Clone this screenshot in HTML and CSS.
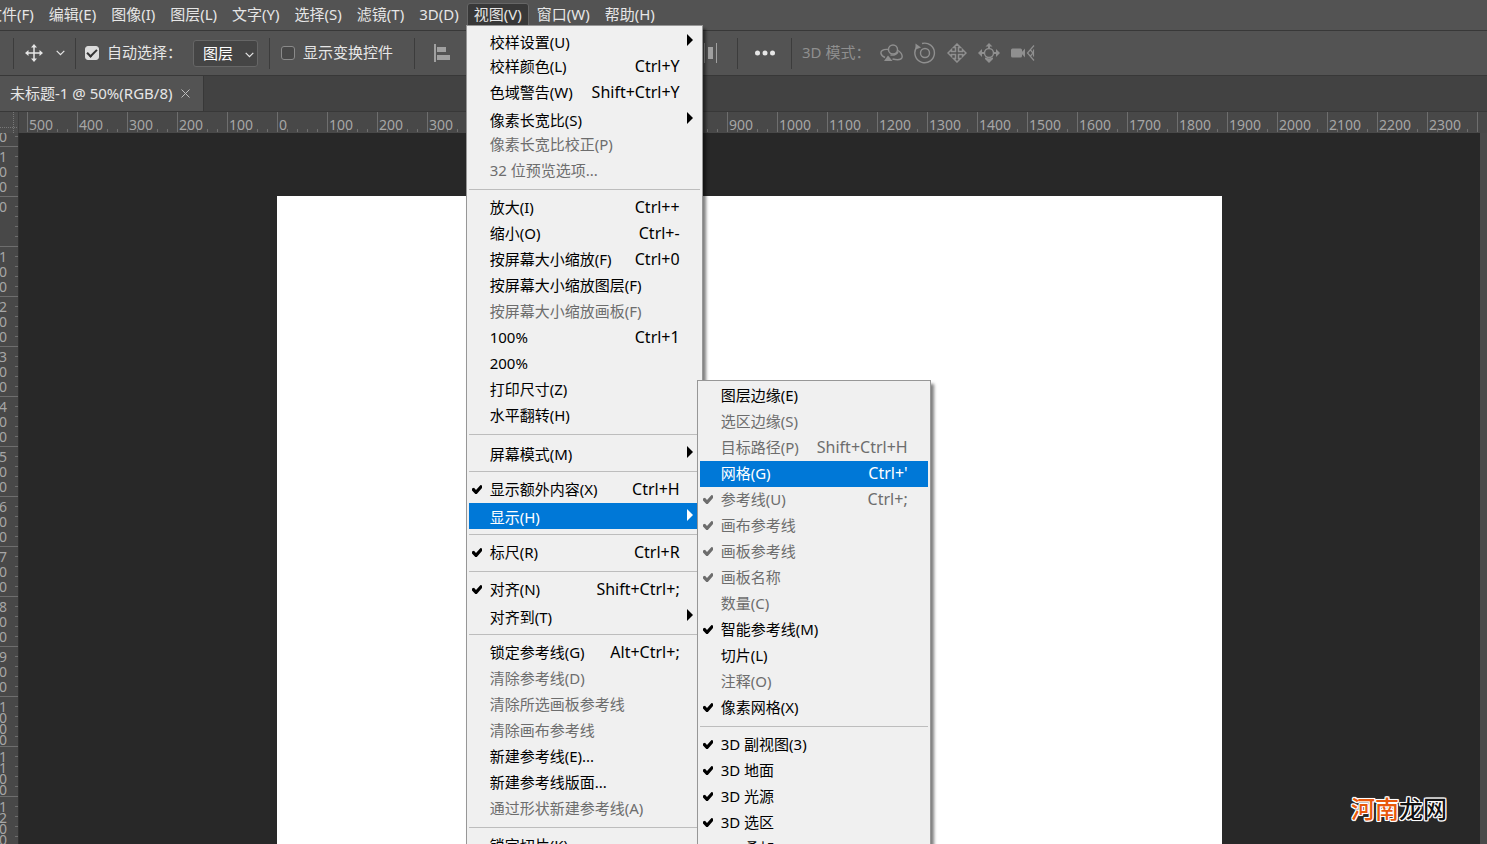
FILE: index.html
```html
<!DOCTYPE html>
<html lang="zh-CN">
<head>
<meta charset="utf-8">
<title>未标题-1 @ 50%(RGB/8)</title>
<link rel="stylesheet" href="styles.css">
</head>
<body>
<svg class="defs" aria-hidden="true">
  <symbol id="check" viewBox="0 0 10 9"><path d="M0 3.5 2 2.800 4 5 8.500 0 10 0.500V3L4.800 9H3.300L0 5.500z" fill="currentColor"/></symbol>
  <symbol id="arrow" viewBox="0 0 6 12"><path d="M0 0 6 6 0 12z" fill="currentColor"/></symbol>
  <symbol id="chevron" viewBox="0 0 9 6"><path d="M.7.8 4.500 4.600 8.300.8" fill="none" stroke="currentColor" stroke-width="1.200"/></symbol>
</svg>
<div class="app">
  <nav class="menubar">
    <div class="menubar-item"><button class="menubar-button">文件(F)</button></div>
    <div class="menubar-item"><button class="menubar-button">编辑(E)</button></div>
    <div class="menubar-item"><button class="menubar-button">图像(I)</button></div>
    <div class="menubar-item"><button class="menubar-button">图层(L)</button></div>
    <div class="menubar-item"><button class="menubar-button">文字(Y)</button></div>
    <div class="menubar-item"><button class="menubar-button">选择(S)</button></div>
    <div class="menubar-item"><button class="menubar-button">滤镜(T)</button></div>
    <div class="menubar-item"><button class="menubar-button">3D(D)</button></div>
    <div class="menubar-item">
      <button class="menubar-button is-open">视图(V)</button>
      <ul class="menu menu-view">
        <li><button class="item has-sub"><span>校样设置(U)</span><svg class="arrow"><use href="#arrow"/></svg></button></li>
        <li><button class="item"><span>校样颜色(L)</span><kbd>Ctrl+Y</kbd></button></li>
        <li><button class="item"><span>色域警告(W)</span><kbd>Shift+Ctrl+Y</kbd></button></li>
        <li><button class="item has-sub"><span>像素长宽比(S)</span><svg class="arrow"><use href="#arrow"/></svg></button></li>
        <li><button class="item" disabled><span>像素长宽比校正(P)</span></button></li>
        <li><button class="item" disabled><span>32 位预览选项...</span></button></li>
        <li class="rule"></li>
        <li><button class="item"><span>放大(I)</span><kbd>Ctrl++</kbd></button></li>
        <li><button class="item"><span>缩小(O)</span><kbd>Ctrl+-</kbd></button></li>
        <li><button class="item"><span>按屏幕大小缩放(F)</span><kbd>Ctrl+0</kbd></button></li>
        <li><button class="item"><span>按屏幕大小缩放图层(F)</span></button></li>
        <li><button class="item" disabled><span>按屏幕大小缩放画板(F)</span></button></li>
        <li><button class="item"><span>100%</span><kbd>Ctrl+1</kbd></button></li>
        <li><button class="item"><span>200%</span></button></li>
        <li><button class="item"><span>打印尺寸(Z)</span></button></li>
        <li><button class="item"><span>水平翻转(H)</span></button></li>
        <li class="rule"></li>
        <li><button class="item has-sub"><span>屏幕模式(M)</span><svg class="arrow"><use href="#arrow"/></svg></button></li>
        <li class="rule"></li>
        <li><button class="item"><svg class="check"><use href="#check"/></svg><span>显示额外内容(X)</span><kbd>Ctrl+H</kbd></button></li>
        <li class="sub-host">
          <button class="item has-sub is-active"><span>显示(H)</span><svg class="arrow"><use href="#arrow"/></svg></button>
          <ul class="menu menu-show">
            <li><button class="item"><span>图层边缘(E)</span></button></li>
            <li><button class="item" disabled><span>选区边缘(S)</span></button></li>
            <li><button class="item" disabled><span>目标路径(P)</span><kbd>Shift+Ctrl+H</kbd></button></li>
            <li><button class="item is-active"><span>网格(G)</span><kbd>Ctrl+'</kbd></button></li>
            <li><button class="item" disabled><svg class="check"><use href="#check"/></svg><span>参考线(U)</span><kbd>Ctrl+;</kbd></button></li>
            <li><button class="item" disabled><svg class="check"><use href="#check"/></svg><span>画布参考线</span></button></li>
            <li><button class="item" disabled><svg class="check"><use href="#check"/></svg><span>画板参考线</span></button></li>
            <li><button class="item" disabled><svg class="check"><use href="#check"/></svg><span>画板名称</span></button></li>
            <li><button class="item" disabled><span>数量(C)</span></button></li>
            <li><button class="item"><svg class="check"><use href="#check"/></svg><span>智能参考线(M)</span></button></li>
            <li><button class="item"><span>切片(L)</span></button></li>
            <li><button class="item" disabled><span>注释(O)</span></button></li>
            <li><button class="item"><svg class="check"><use href="#check"/></svg><span>像素网格(X)</span></button></li>
            <li class="rule"></li>
            <li><button class="item"><svg class="check"><use href="#check"/></svg><span>3D 副视图(3)</span></button></li>
            <li><button class="item"><svg class="check"><use href="#check"/></svg><span>3D 地面</span></button></li>
            <li><button class="item"><svg class="check"><use href="#check"/></svg><span>3D 光源</span></button></li>
            <li><button class="item"><svg class="check"><use href="#check"/></svg><span>3D 选区</span></button></li>
            <li><button class="item"><span>UV 叠加</span></button></li>
          </ul>
        </li>
        <li class="rule"></li>
        <li><button class="item"><svg class="check"><use href="#check"/></svg><span>标尺(R)</span><kbd>Ctrl+R</kbd></button></li>
        <li class="rule"></li>
        <li><button class="item"><svg class="check"><use href="#check"/></svg><span>对齐(N)</span><kbd>Shift+Ctrl+;</kbd></button></li>
        <li><button class="item has-sub"><span>对齐到(T)</span><svg class="arrow"><use href="#arrow"/></svg></button></li>
        <li class="rule"></li>
        <li><button class="item"><span>锁定参考线(G)</span><kbd>Alt+Ctrl+;</kbd></button></li>
        <li><button class="item" disabled><span>清除参考线(D)</span></button></li>
        <li><button class="item" disabled><span>清除所选画板参考线</span></button></li>
        <li><button class="item" disabled><span>清除画布参考线</span></button></li>
        <li><button class="item"><span>新建参考线(E)...</span></button></li>
        <li><button class="item"><span>新建参考线版面...</span></button></li>
        <li><button class="item" disabled><span>通过形状新建参考线(A)</span></button></li>
        <li class="rule"></li>
        <li><button class="item"><span>锁定切片(K)</span></button></li>
      </ul>
    </div>
    <div class="menubar-item"><button class="menubar-button">窗口(W)</button></div>
    <div class="menubar-item"><button class="menubar-button">帮助(H)</button></div>
  </nav>

  <div class="options">
    <div class="group group-tool">
      <button class="icon-button" aria-label="移动工具"><svg width="18" height="18" viewBox="0 0 18 18"><path d="M9 2v14M2 9h14" stroke="currentColor" stroke-width="1.500"/><path d="M9 0l3 3.500H6zM9 18l3-3.500H6zM0 9l3.500-3v6zM18 9l-3.500-3v6z" fill="currentColor"/></svg></button>
      <button class="icon-button" aria-label="工具预设"><svg width="9" height="6"><use href="#chevron"/></svg></button>
    </div>
    <div class="group group-select">
      <input class="box" type="checkbox" id="auto" checked>
      <label for="auto">自动选择：</label>
      <span class="select-wrap"><select class="select" aria-label="自动选择对象"><option>图层</option></select><svg class="select-arrow" width="9" height="6"><use href="#chevron"/></svg></span>
    </div>
    <div class="group group-transform">
      <input class="box" type="checkbox" id="transform">
      <label for="transform">显示变换控件</label>
    </div>
    <div class="group group-align">
      <button class="icon-button" aria-label="左对齐"><svg width="16" height="18" viewBox="0 0 16 18"><path d="M0 0h2v18H0zM3 3h9v5H3zM3 11h13v5H3z" fill="currentColor"/></svg></button>
      <button class="icon-button" aria-label="水平居中对齐"><svg width="16" height="18" viewBox="0 0 16 18"><path d="M7 0h2v18H7zM3 3h10v5H3zM0 11h16v5H0z" fill="currentColor"/></svg></button>
      <button class="icon-button" aria-label="右对齐"><svg width="16" height="18" viewBox="0 0 16 18"><path d="M14 0h2v18h-2zM4 3h9v5H4zM0 11h13v5H0z" fill="currentColor"/></svg></button>
      <button class="icon-button" aria-label="水平分布"><svg width="14" height="20" viewBox="0 0 14 20"><path d="M0 0h1v20H0zM12 0h1v20h-1zM4 4h5v12H4z" fill="currentColor"/></svg></button>
    </div>
    <div class="group group-more">
      <button class="icon-button" aria-label="更多"><svg width="20" height="6" viewBox="0 0 20 6"><circle cx="2.500" cy="3" r="2.500" fill="currentColor"/><circle cx="10" cy="3" r="2.500" fill="currentColor"/><circle cx="17.500" cy="3" r="2.500" fill="currentColor"/></svg></button>
    </div>
    <div class="group group-3d">
      <span class="mode-label">3D 模式：</span>
      <button class="icon-button" aria-label="环绕"><svg width="23" height="20" viewBox="0 0 23 20" fill="none" stroke="currentColor" stroke-width="1.400"><circle cx="13" cy="6.500" r="4.500"/><path d="M8 6.500C3 6 .5 8 1 10.500c.3 1.600 1.800 3 4 4M18 7.500c3 2 4.500 5 4 7-.8 2.500-5 2.600-9.500 1.500M18 9c-1.500 2.300-4.500 3.500-7.500 3"/><path d="M4 18l4-5.500 4.500 5.500z" fill="currentColor" stroke="none"/></svg></button>
      <button class="icon-button" aria-label="滚动"><svg width="22" height="22" viewBox="0 0 22 22" fill="none" stroke="currentColor" stroke-width="1.400"><circle cx="11" cy="11" r="4.500"/><path d="M8 1.500a9.800 9.800 0 1 1-5.500 4"/><path d="M1.500 1.500v6l5.500-2z" fill="currentColor" stroke="none"/></svg></button>
      <button class="icon-button" aria-label="平移"><svg width="20" height="20" viewBox="0 0 20 20" fill="none" stroke="currentColor" stroke-width="1.500"><path d="M10 1l3.500 3.500H11.500V8.500H15.500V6.500L19 10l-3.500 3.500V11.500H11.500V15.500H13.500L10 19l-3.500-3.500H8.500V11.500H4.500V13.500L1 10l3.500-3.500V8.500H8.500V4.500H6.500z"/></svg></button>
      <button class="icon-button" aria-label="滑动"><svg width="22" height="20" viewBox="0 0 22 20"><circle cx="11" cy="10" r="4.500" fill="none" stroke="currentColor" stroke-width="1.400"/><path d="M11 0l3.500 3.500H12V5.500h-2V3.500H7.500zM0 10l4-4v3h2.500v2H4v3zM22 10l-4-4v3h-2.500v2H18v3zM7 14.500l4 1 4-1v1.500l-4 4-4-4z" fill="currentColor"/></svg></button>
      <button class="icon-button" aria-label="变焦相机"><svg width="24" height="16" viewBox="0 0 24 16"><rect y="3.500" width="11" height="9" rx="1.500" fill="currentColor"/><path d="M10 8l4-4.500v9z" fill="currentColor"/><path d="M23 .5 16.500 8l6.500 7.500M22.500 4.500v7M19.500 5l2.500 3-2.500 3" fill="none" stroke="currentColor" stroke-width="1.200"/></svg></button>
    </div>
  </div>

  <div class="tabs">
    <div class="tab"><span>未标题-1 @ 50%(RGB/8)</span><button class="icon-button tab-close" aria-label="关闭"><svg width="9" height="9" viewBox="0 0 9 9"><path d="M.5.500l8 8M8.500.500l-8 8" stroke="currentColor"/></svg></button></div>
  </div>

  <div class="ruler-row">
    <div class="corner"></div>
    <div class="ruler-h">
      <span>500</span><span>400</span><span>300</span><span>200</span><span>100</span><span>0</span><span>100</span><span>200</span><span>300</span><span>400</span><span>500</span><span>600</span><span>700</span><span>800</span><span>900</span><span>1000</span><span>1100</span><span>1200</span><span>1300</span><span>1400</span><span>1500</span><span>1600</span><span>1700</span><span>1800</span><span>1900</span><span>2000</span><span>2100</span><span>2200</span><span>2300</span><span></span>
    </div>
  </div>

  <div class="stage">
    <div class="ruler-v">
      <span class="partial"><i>0</i></span>
      <span><i>1</i><i>0</i><i>0</i></span>
      <span><i>0</i></span>
      <span><i>1</i><i>0</i><i>0</i></span>
      <span><i>2</i><i>0</i><i>0</i></span>
      <span><i>3</i><i>0</i><i>0</i></span>
      <span><i>4</i><i>0</i><i>0</i></span>
      <span><i>5</i><i>0</i><i>0</i></span>
      <span><i>6</i><i>0</i><i>0</i></span>
      <span><i>7</i><i>0</i><i>0</i></span>
      <span><i>8</i><i>0</i><i>0</i></span>
      <span><i>9</i><i>0</i><i>0</i></span>
      <span class="dense"><i>1</i><i>0</i><i>0</i><i>0</i></span>
      <span class="dense"><i>1</i><i>1</i><i>0</i><i>0</i></span>
      <span class="dense"><i>1</i><i>2</i><i>0</i><i>0</i></span>
    </div>
    <main class="pasteboard"><div class="canvas"></div></main>
    <div class="scrollbar"></div>
    <div class="watermark"><span class="brand">河南</span><span>龙网</span></div>
  </div>
</div>
</body>
</html>
```
FILE: styles.css
```css
* { box-sizing: border-box; }

body {
  margin: 0;
  background: #282828;
  color: #e6e6e6;
  font: 15px/20px "Noto Sans", "Noto Sans CJK SC", sans-serif;
}

button, select, kbd { font: inherit; color: inherit; }
button { border: 0; padding: 0; background: none; }
svg { display: block; flex: none; }
.defs { position: absolute; width: 0; height: 0; }

.app {
  display: flex;
  flex-direction: column;
  height: 100vh;
  overflow: hidden;
}

/* Menu bar */
.menubar {
  display: flex;
  gap: 1px;
  height: 31px;
  padding-top: 3px;
  background: #535353;
  border-bottom: 1px solid #383838;
}
.menubar-item { position: relative; flex: none; }
.menubar-item:first-child { margin-left: -20px; }
.menubar-button {
  display: block;
  height: 23px;
  padding: 0 6px 2px;
  border: 1px solid transparent;
  border-radius: 3px 3px 0 0;
  white-space: nowrap;
}
.menubar-button.is-open { background: #383838; border-color: #666; }

/* Drop-down menus */
.menu {
  position: absolute;
  z-index: 2;
  margin: 0;
  padding: 2px;
  list-style: none;
  color: #000;
  background: #f0f0f0;
  border: 1px solid #979797;
  box-shadow: 3px 4px 3px rgba(0, 0, 0, 0.5);
}
.menu-view { top: 22px; left: -1px; width: 237px; }
.menu-show { top: -123px; left: 228px; width: 234px; }
.sub-host { position: relative; }
.item {
  position: relative;
  display: flex;
  align-items: center;
  justify-content: space-between;
  width: 100%;
  height: 26px;
  padding: 0 20px 2px 21px;
  white-space: nowrap;
  text-align: left;
}
.item:disabled { color: #6d6d6d; }
.item.is-active { color: #fff; background: #0078d7; }
.item.has-sub > span { padding-top: 4px; }
.item kbd { font-size: 16px; }
.check { position: absolute; left: 3px; top: 8px; width: 10px; height: 9px; }
.arrow { position: absolute; right: 7px; top: 6px; width: 6px; height: 12px; }
.rule { height: 11px; padding: 5px 0; }
.rule::before { content: ""; display: block; height: 1px; background: #bdbdbd; }

/* Options bar */
.options {
  display: flex;
  align-items: center;
  height: 45px;
  padding-left: 13px;
  background: #535353;
  border-bottom: 1px solid #383838;
  white-space: nowrap;
}
.group {
  display: flex;
  align-items: center;
  flex: none;
  height: 31px;
  border-left: 1px solid #3c3c3c;
}
.group-tool { width: 62px; padding-left: 11px; gap: 13px; }
.group-select { width: 194px; padding-left: 9px; gap: 8px; }
.group-transform { width: 145px; padding-left: 11px; gap: 8px; }
.group-align { width: 323px; padding: 0 19px; justify-content: space-between; color: #a0a0a0; }
.group-more { width: 54px; padding-left: 17px; }
.group-3d { padding-left: 10px; gap: 11px; color: #8f8f8f; }
.group label, .mode-label { padding-bottom: 2px; }
.mode-label { width: 67px; }
.box {
  appearance: none;
  width: 14px;
  height: 14px;
  margin: 0;
  border: 1px solid #8a8a8a;
  border-radius: 3px;
  background: #484848;
}
.box:checked { display: grid; place-items: center; background: #dcdcdc; border-color: #dcdcdc; }
.box:checked::before {
  content: "";
  width: 8px;
  height: 4px;
  margin-bottom: 3px;
  border: solid #333;
  border-width: 0 0 2px 2px;
  rotate: -45deg;
}
.select-wrap { position: relative; margin-left: auto; margin-right: 11px; }
.select {
  appearance: none;
  display: block;
  width: 65px;
  height: 27px;
  padding: 0 9px;
  color: #fff;
  background: #454545;
  border: 1px solid #666;
  border-radius: 3px;
}
.select-arrow { position: absolute; right: 4px; top: 12px; pointer-events: none; }

/* Document tabs */
.tabs {
  display: flex;
  height: 36px;
  background: #424242;
  border-bottom: 1px solid #383838;
}
.tab {
  display: flex;
  align-items: center;
  gap: 9px;
  padding: 0 13px 0 10px;
  background: #535353;
  border-right: 1px solid #383838;
}
.tab span { padding-bottom: 2px; }
.tab-close { color: #bdbdbd; }

/* Rulers */
.ruler-row { display: flex; height: 21px; background: #484848; }
.corner {
  flex: none;
  width: 19px;
  background:
    repeating-linear-gradient(#777 0 1px, transparent 1px 2px) 13px 0 / 1px 100% no-repeat,
    repeating-linear-gradient(90deg, #777 0 1px, transparent 1px 2px) 0 15px / 100% 1px no-repeat,
    #4c4c4c;
  border-right: 1px solid #3c3c3c;
}
.ruler-h {
  display: flex;
  flex: 1;
  min-width: 0;
  overflow: hidden;
  padding-left: 8px;
  color: #a6a6a6;
  font-size: 14px;
}
.ruler-h span {
  flex: none;
  width: 50px;
  height: 20px;
  padding: 3px 0 0 1px;
  border-left: 1px solid #6e6e6e;
  background: repeating-linear-gradient(90deg, transparent 0 9px, #6e6e6e 9px 10px) 0 100% / 49px 3px no-repeat;
}
.stage { position: relative; display: flex; flex: 1; min-height: 0; }
.ruler-v {
  flex: none;
  width: 19px;
  overflow: hidden;
  background: #484848;
  border-right: 1px solid #303030;
  color: #a6a6a6;
  font-size: 14px;
  line-height: 15px;
}
.ruler-v span {
  display: flex;
  flex-direction: column;
  height: 50px;
  padding-top: 2px;
  border-top: 1px solid #6e6e6e;
  background: repeating-linear-gradient(transparent 0 9px, #6e6e6e 9px 10px) 100% 0 / 3px 49px no-repeat;
}
.ruler-v i { margin-left: -1px; font-style: normal; }
.ruler-v .partial { justify-content: flex-end; height: 13px; padding: 0 0 2px; border: 0; background-position: 100% -6px; }
.ruler-v .dense { padding-top: 4px; line-height: 11px; }

/* Document area */
.pasteboard { display: flex; flex: 1; padding: 63px 258px 0; background: #282828; }
.canvas { flex: 1; background: #fff; }
.scrollbar { flex: none; width: 7px; background: #4a4a4a; }
.watermark {
  position: absolute;
  right: 40px;
  bottom: 18px;
  color: #111;
  font: 500 24px/36px "Noto Sans CJK SC", sans-serif;
  text-shadow: 1px 0 #fff, -1px 0 #fff, 0 1px #fff, 0 -1px #fff, 1px 1px #fff, -1px -1px #fff, 1px -1px #fff, -1px 1px #fff, 0 0 2px #fff;
}
.brand { color: #e8590c; }
```
